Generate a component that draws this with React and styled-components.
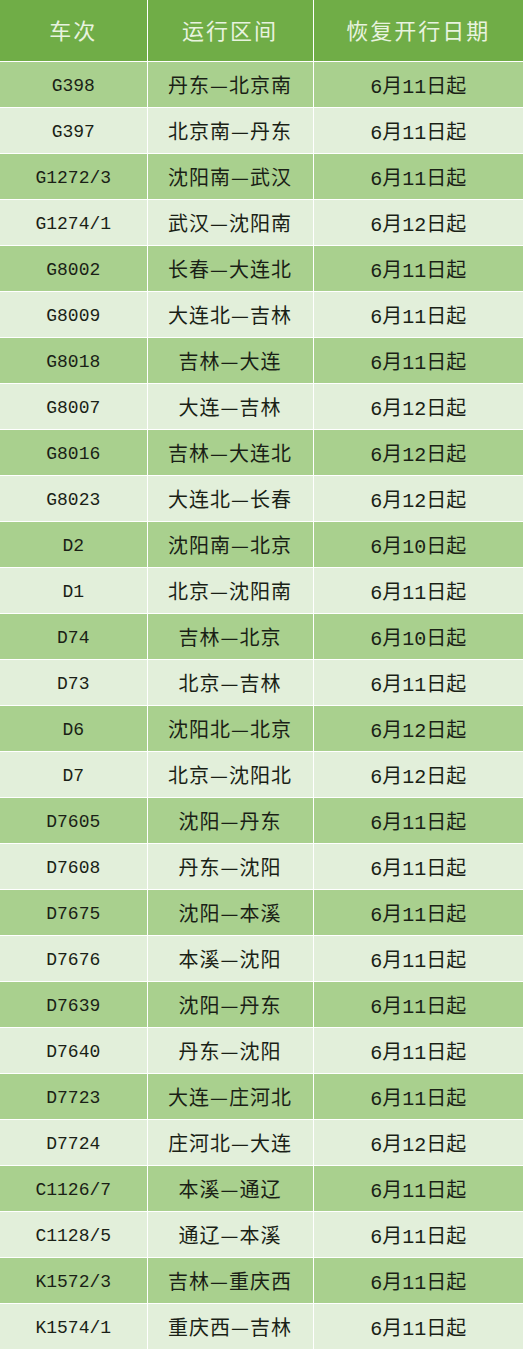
import React from "react";
import styled, { createGlobalStyle } from "styled-components";

const trains = [
  ["G398", "丹东—北京南", "6月11日起"],
  ["G397", "北京南—丹东", "6月11日起"],
  ["G1272/3", "沈阳南—武汉", "6月11日起"],
  ["G1274/1", "武汉—沈阳南", "6月12日起"],
  ["G8002", "长春—大连北", "6月11日起"],
  ["G8009", "大连北—吉林", "6月11日起"],
  ["G8018", "吉林—大连", "6月11日起"],
  ["G8007", "大连—吉林", "6月12日起"],
  ["G8016", "吉林—大连北", "6月12日起"],
  ["G8023", "大连北—长春", "6月12日起"],
  ["D2", "沈阳南—北京", "6月10日起"],
  ["D1", "北京—沈阳南", "6月11日起"],
  ["D74", "吉林—北京", "6月10日起"],
  ["D73", "北京—吉林", "6月11日起"],
  ["D6", "沈阳北—北京", "6月12日起"],
  ["D7", "北京—沈阳北", "6月12日起"],
  ["D7605", "沈阳—丹东", "6月11日起"],
  ["D7608", "丹东—沈阳", "6月11日起"],
  ["D7675", "沈阳—本溪", "6月11日起"],
  ["D7676", "本溪—沈阳", "6月11日起"],
  ["D7639", "沈阳—丹东", "6月11日起"],
  ["D7640", "丹东—沈阳", "6月11日起"],
  ["D7723", "大连—庄河北", "6月11日起"],
  ["D7724", "庄河北—大连", "6月12日起"],
  ["C1126/7", "本溪—通辽", "6月11日起"],
  ["C1128/5", "通辽—本溪", "6月11日起"],
  ["K1572/3", "吉林—重庆西", "6月11日起"],
  ["K1574/1", "重庆西—吉林", "6月11日起"],
];

function App() {
  return (
    <>
      <GlobalStyle />
      <Table>
        <colgroup>
          <col style={{ width: 147 }} />
          <col style={{ width: 166 }} />
          <col />
        </colgroup>
        <thead>
          <HeadRow>
            <HeadCell>车次</HeadCell>
            <HeadCell>运行区间</HeadCell>
            <HeadCell>恢复开行日期</HeadCell>
          </HeadRow>
        </thead>
        <tbody>
          {trains.map((t, i) => (
            <Row key={t[0]} $dark={i % 2 === 0}>
              <CodeCell>{t[0]}</CodeCell>
              <RouteCell>{t[1]}</RouteCell>
              <DateCell>{t[2]}</DateCell>
            </Row>
          ))}
        </tbody>
      </Table>
    </>
  );
}
export default App;

const GlobalStyle = createGlobalStyle`
  body {
    margin: 0;
    background: #e2efda;
  }
`;

const Table = styled.table`
  width: 523px;
  border-collapse: collapse;
  table-layout: fixed;
`;

const HeadRow = styled.tr`
  height: 61px;
  background-color: #70ad47;
`;

const HeadCell = styled.th`
  border: 1px solid #ffffff;
  border-top: none;
  color: #e8f3df;
  font-family: "Noto Sans CJK SC", sans-serif;
  font-weight: 400;
  font-size: 22px;
  letter-spacing: 2px;
  text-align: center;
  padding: 0 0 2px;
  &:first-child {
    border-left: none;
  }
  &:last-child {
    border-right: none;
  }
`;

const Row = styled.tr`
  height: 46px;
  background-color: ${(p) => (p.$dark ? "#a9d08e" : "#e2efda")};
`;

const Cell = styled.td`
  border: 1px solid #ffffff;
  color: #1a1f16;
  text-align: center;
  padding: 0;
  font-size: 20px;
  &:first-child {
    border-left: none;
  }
  &:last-child {
    border-right: none;
  }
`;

const CodeCell = styled(Cell)`
  font-family: "Liberation Mono", monospace;
  font-size: 18px;
  padding-top: 3px;
`;

const RouteCell = styled(Cell)`
  font-family: "Noto Sans CJK SC", sans-serif;
  letter-spacing: 1px;
`;

const DateCell = styled(Cell)`
  font-family: "Liberation Mono", "Noto Sans CJK SC", monospace;
`;
